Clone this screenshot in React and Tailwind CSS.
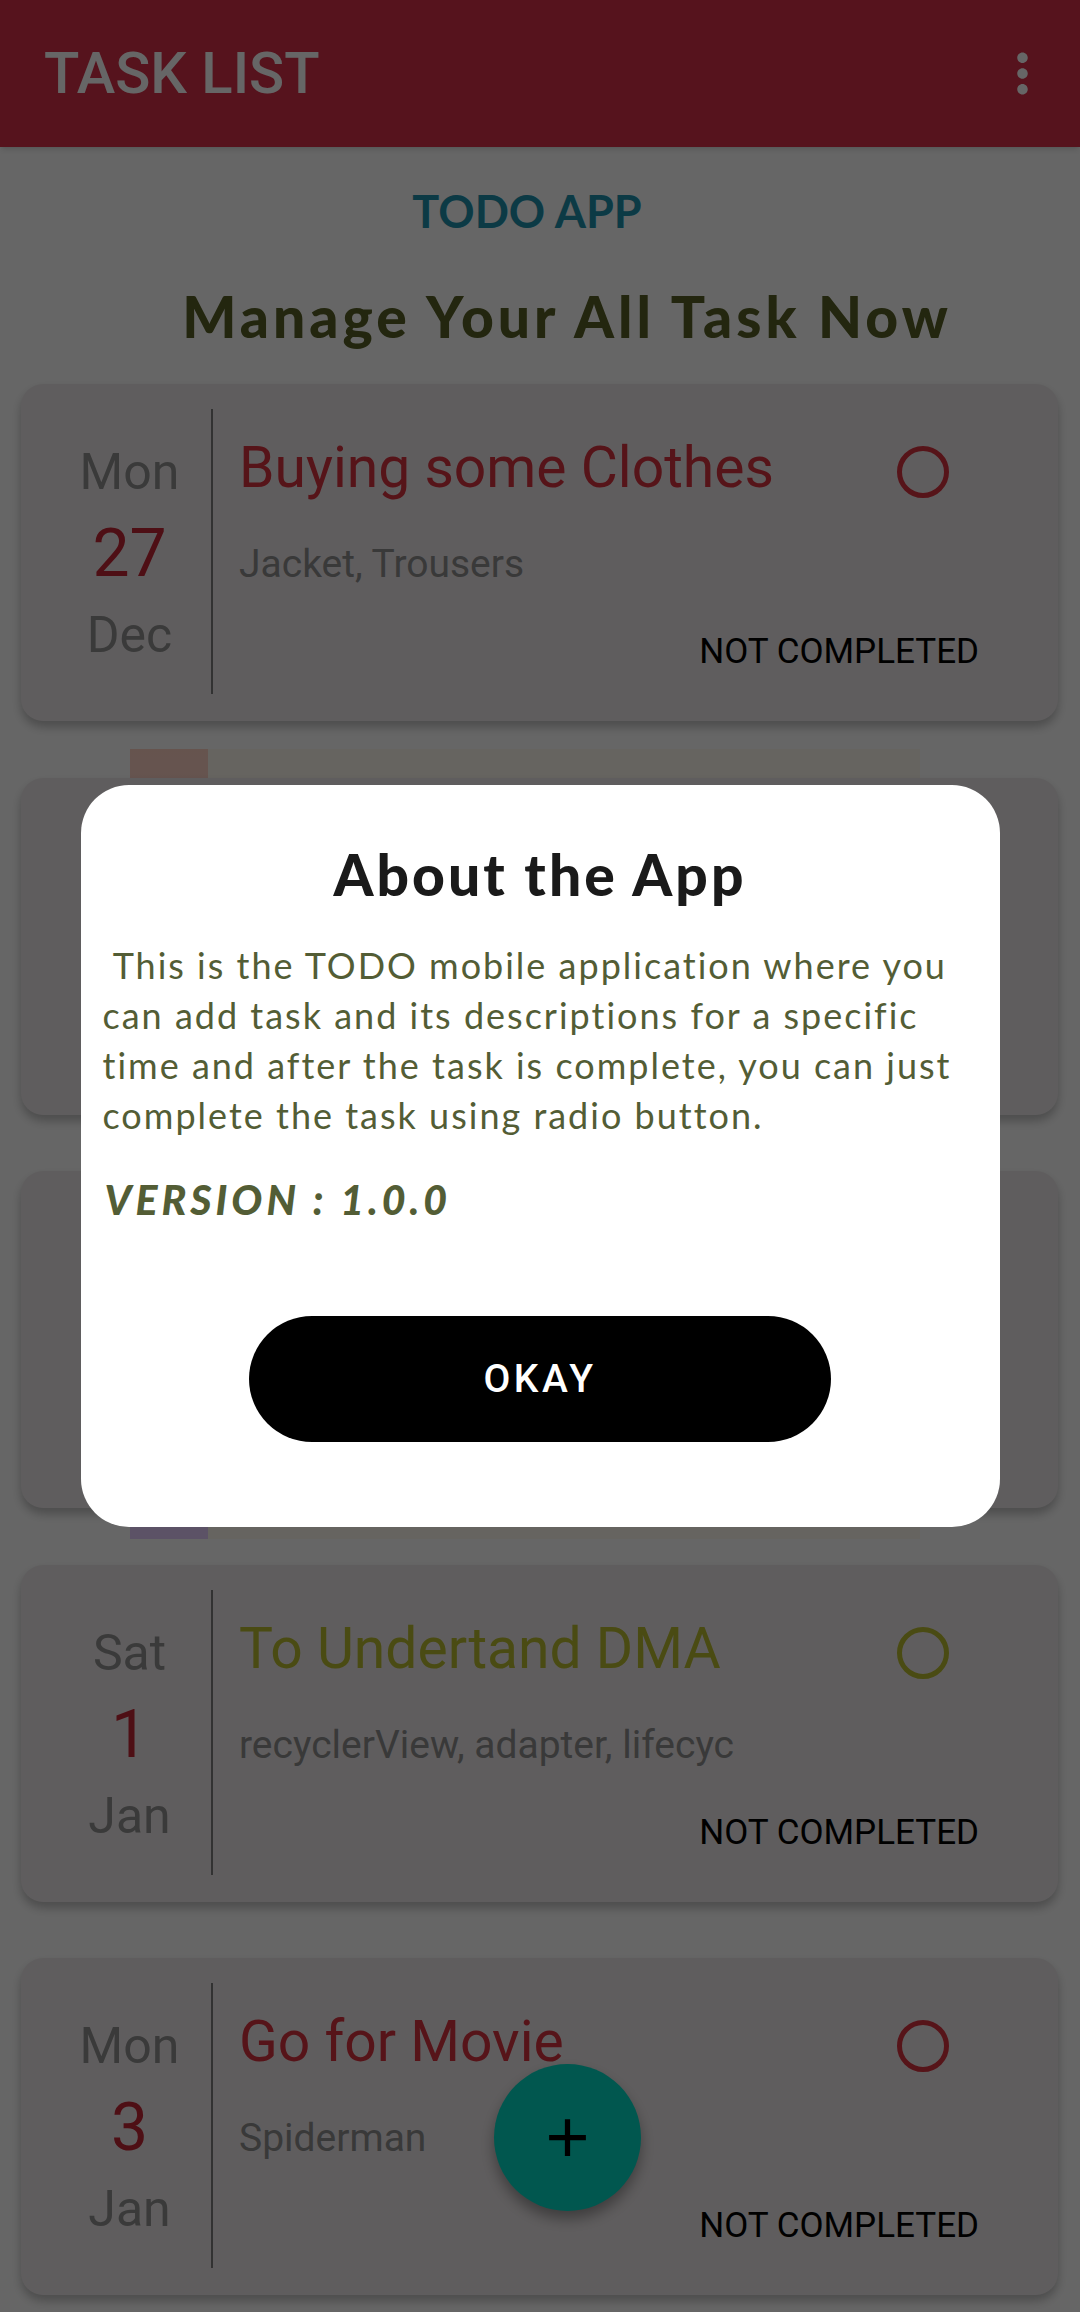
import React from 'react';

const tasks = [
  { id: 1, day: 'Mon', date: '27', month: 'Dec', title: 'Buying some Clothes', desc: 'Jacket, Trousers', tone: 'red' },
  { id: 2, day: 'Wed', date: '29', month: 'Dec', title: 'Complete Assignment', desc: 'Android, DBMS', tone: 'red' },
  { id: 3, day: 'Fri', date: '31', month: 'Dec', title: 'New Year Party', desc: 'Cake, Snacks', tone: 'lime' },
  { id: 4, day: 'Sat', date: '1', month: 'Jan', title: 'To Undertand DMA', desc: 'recyclerView, adapter, lifecyc', tone: 'lime' },
  { id: 5, day: 'Mon', date: '3', month: 'Jan', title: 'Go for Movie', desc: 'Spiderman', tone: 'red' },
];

const roboto = { fontFamily: 'Roboto, "Liberation Sans", sans-serif' };
const lato = { fontFamily: 'Lato, "Open Sans", sans-serif' };

function MoreIcon() {
  return (
    <svg width="63" height="63" viewBox="0 0 24 24" fill="#ffffff">
      <path d="M12 8c1.1 0 2-.9 2-2s-.9-2-2-2-2 .9-2 2 .9 2 2 2zm0 2c-1.1 0-2 .9-2 2s.9 2 2 2 2-.9 2-2-.9-2-2-2zm0 6c-1.1 0-2 .9-2 2s.9 2 2 2 2-.9 2-2-.9-2-2-2z" />
    </svg>
  );
}

function PlusIcon() {
  return (
    <svg width="63" height="63" viewBox="0 0 24 24" fill="#000000">
      <path d="M19 13h-6v6h-2v-6H5v-2h6V5h2v6h6v2z" />
    </svg>
  );
}

function TaskCard({ task }) {
  const isRed = task.tone === 'red';
  return (
    <div className="h-[337px] rounded-[22px] bg-[#eee9eb] shadow-[0_6px_10px_rgba(0,0,0,0.25)] flex pt-[25px] pb-[27px]" style={roboto}>
      {/* date column */}
      <div className="w-[190px] pl-[27px] flex flex-col items-center text-[#929292]">
        <div className="mt-[33px] text-[50px] leading-[60px]">{task.day}</div>
        <div className="mt-[13px] text-[66px] leading-[78px] text-[#c42636]">{task.date}</div>
        <div className="mt-[12px] text-[50px] leading-[60px]">{task.month}</div>
      </div>
      <div className="w-[2px] bg-[#7d7d7d]" />
      <div className="flex-1 pl-[26px] pr-[79px] flex flex-col">
        <div className="mt-[26px] flex items-start justify-between pr-[30px]">
          <div className={`text-[57px] leading-[66px] whitespace-nowrap ${isRed ? 'text-[#d8323f]' : 'text-[#b9bb30]'}`}>
            {task.title}
          </div>
          <div className={`mt-[11px] w-[52px] h-[52px] rounded-full border-[5px] ${isRed ? 'border-[#d8323f]' : 'border-[#b9bb30]'}`} />
        </div>
        <div className="mt-[40px] text-[39px] leading-[46px] text-[#8f8f8f] whitespace-nowrap">{task.desc}</div>
        <div className="mt-[45px] text-[35px] leading-[40px] text-black text-right">NOT COMPLETED</div>
      </div>
    </div>
  );
}

export default function App() {
  return (
    <div className="relative w-[1080px] h-[2312px] overflow-hidden bg-white">
      {/* toolbar */}
      <div className="h-[147px] bg-[#d73049] flex items-center justify-between pl-[44px] pr-[26px] shadow-md relative z-10">
        <div className="text-white text-[58px] font-medium" style={roboto}>TASK LIST</div>
        <MoreIcon />
      </div>

      {/* illustration sitting behind the list */}
      <div className="absolute left-[130px] top-[749px] w-[790px] h-[790px] bg-[#fffaf0] flex">
        <div className="w-[78px] h-full bg-gradient-to-b from-[#ffd2c4] via-[#f4d8e8] to-[#e6ccff]" />
      </div>

      <div className="relative" style={lato}>
        <div className="mt-[37px] text-center pr-[26px] text-[45px] leading-[54px] font-bold text-[#1e91ac]">TODO APP</div>
        <div className="mt-[44px] text-center pl-[54px] text-[57px] leading-[68px] font-black tracking-[4px] text-[#585f26]">
          Manage Your All Task Now
        </div>
      </div>

      <div className="relative mt-[34px] ml-[21px] mr-[22px] flex flex-col gap-[56.5px]">
        {tasks.map(task => (
          <TaskCard key={task.id} task={task} />
        ))}
      </div>

      {/* add button */}
      <button className="absolute left-[494px] top-[2064px] w-[147px] h-[147px] rounded-full bg-[#03dac5] flex items-center justify-center shadow-[0_8px_14px_rgba(0,0,0,0.35)]">
        <PlusIcon />
      </button>

      {/* dialog */}
      <div className="absolute inset-0 bg-black/60 flex items-center justify-center z-20">
        <div className="w-[919px] h-[742px] bg-white rounded-[48px] flex flex-col pt-[56px]" style={lato}>
          <h2 className="text-center text-[57px] leading-[66px] font-black tracking-[3px] text-[#1a1a1a]">About the App</h2>
          <p className="mt-[33px] pl-[22px] pr-[22px] text-[36px] leading-[50px] tracking-[2px] text-[#535d35]">
            {'\u00a0'}This is the TODO mobile application where you can add task and its descriptions for a specific time and after the task is complete, you can just complete the task using radio button.
          </p>
          <p className="mt-[35px] pl-[24px] text-[41px] leading-[50px] font-black italic tracking-[4px] text-[#535d35]">VERSION : 1.0.0</p>
          <div className="mt-[91px] flex justify-center">
            <button className="w-[582px] h-[126px] rounded-full bg-black text-white text-[39px] font-medium tracking-[0.09em]" style={roboto}>
              OKAY
            </button>
          </div>
        </div>
      </div>
    </div>
  );
}
